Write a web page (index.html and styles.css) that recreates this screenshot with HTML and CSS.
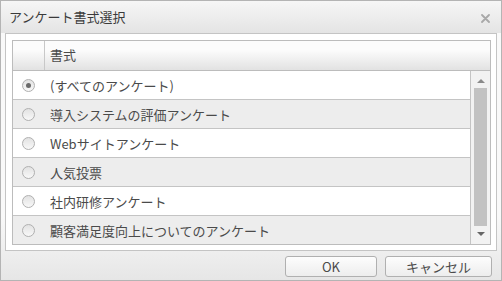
FILE: index.html
```html
<!DOCTYPE html>
<html lang="ja">
<head>
    <meta charset="UTF-8">
    <title>アンケート書式選択</title>
    <link rel="stylesheet" href="styles.css">
</head>
<body>
    <div class="dialog">
        <div class="titlebar">
            <span class="title">アンケート書式選択</span>
            <span class="close">
                <svg width="9" height="9" viewBox="0 0 9 9">
                    <path d="M1 1 L8 8 M8 1 L1 8" stroke="#a8a8a8" stroke-width="1.8" stroke-linecap="round"/>
                </svg>
            </span>
        </div>

        <div class="panel">
            <div class="grid">
                <div class="grid-head">
                    <div class="head-check"></div>
                    <div class="head-label">書式</div>
                </div>
                <div class="grid-body">
                    <div class="rows">
                        <div class="row"><span class="radio checked"></span><span class="label">(すべてのアンケート)</span></div>
                        <div class="row alt"><span class="radio"></span><span class="label">導入システムの評価アンケート</span></div>
                        <div class="row"><span class="radio"></span><span class="label">Webサイトアンケート</span></div>
                        <div class="row alt"><span class="radio"></span><span class="label">人気投票</span></div>
                        <div class="row"><span class="radio"></span><span class="label">社内研修アンケート</span></div>
                        <div class="row alt last"><span class="radio"></span><span class="label">顧客満足度向上についてのアンケート</span></div>
                    </div>
                    <div class="scrollbar">
                        <span class="arrow up"></span>
                        <span class="thumb"></span>
                        <span class="arrow down"></span>
                    </div>
                </div>
            </div>
        </div>

        <div class="footer">
            <button class="btn btn-ok">OK</button>
            <button class="btn btn-cancel">キャンセル</button>
        </div>
    </div>
</body>
</html>
```

FILE: styles.css
```css
body {
    margin: 0;
    font-family: "Noto Sans CJK JP", "Liberation Sans", sans-serif;
    font-size: 13px;
    color: #444;
}
.dialog {
    width: 502px;
    height: 281px;
    box-sizing: border-box;
    border: 1px solid #b4b4b4;
    background: linear-gradient(#f9f9f9, #f9f9f9 215px, #e6e6e6);
    display: flex;
    flex-direction: column;
}
.titlebar {
    height: 32px;
    flex: none;
    display: flex;
    align-items: center;
    justify-content: space-between;
    padding: 0 11px 0 8px;
    background: linear-gradient(#f6f6f6, #e4e4e4);
}
.title {
    color: #3a3a3a;
    line-height: 1;
    margin-top: -2px;
}
.close {
    display: flex;
    margin-top: 2px;
}
.panel {
    margin: 0 4px 0 4px;
    padding: 6px 5px 5px 6px;
    border: 1px solid #c4c4c4;
    background: #fff;
}
.grid {
    border: 1px solid #bcbcbc;
}
.grid-head {
    height: 29px;
    display: flex;
    border-bottom: 1px solid #bcbcbc;
    background: linear-gradient(#fcfcfc, #fcfcfc 30%, #e2e2e2);
}
.head-check {
    width: 31px;
    border-right: 1px solid #c8c8c8;
}
.head-label {
    padding-left: 5px;
    line-height: 27px;
    color: #4a4a4a;
}
.grid-body {
    display: flex;
}
.rows {
    flex: 1;
}
.row {
    height: 28px;
    display: flex;
    align-items: center;
    border-bottom: 1px solid #c4c4c4;
    background: #fff;
}
.row.alt {
    background: #ededed;
}
.row.last {
    border-bottom: none;
}
.radio {
    width: 11px;
    height: 11px;
    margin-left: 9px;
    margin-right: 15px;
    border: 1px solid #b0b0b0;
    border-radius: 50%;
    background: linear-gradient(#e2e2e2, #f8f8f8);
    display: flex;
    align-items: center;
    justify-content: center;
}
.radio.checked::after {
    content: "";
    width: 5px;
    height: 5px;
    border-radius: 50%;
    background: #6a6a6a;
}
.label {
    color: #4a4a4a;
}
.scrollbar {
    width: 19px;
    border-left: 1px solid #c4c4c4;
    background: #f2f2f2;
    display: flex;
    flex-direction: column;
    align-items: center;
}
.arrow {
    width: 0;
    height: 0;
    border-left: 4px solid transparent;
    border-right: 4px solid transparent;
}
.arrow.up {
    margin-top: 8px;
    border-bottom: 4px solid #8a8a8a;
}
.arrow.down {
    margin-top: 6px;
    border-top: 4px solid #666;
}
.thumb {
    width: 13px;
    height: 138px;
    margin-top: 5px;
    background: #c2c2c2;
}
.footer {
    flex: 1;
    display: flex;
    justify-content: flex-end;
    align-items: center;
    gap: 8px;
    padding: 0 9px 0 0;
}
.btn {
    height: 21px;
    margin-top: 1px;
    border: 1px solid #b0b0b0;
    border-radius: 3px;
    background: linear-gradient(#fdfdfd, #ededed);
    font-family: "Noto Sans CJK JP", "Liberation Sans", sans-serif;
    font-size: 13px;
    color: #4a4a4a;
    padding: 0;
    line-height: 1;
}
.btn-ok {
    width: 92px;
}
.btn-cancel {
    width: 107px;
}
```
